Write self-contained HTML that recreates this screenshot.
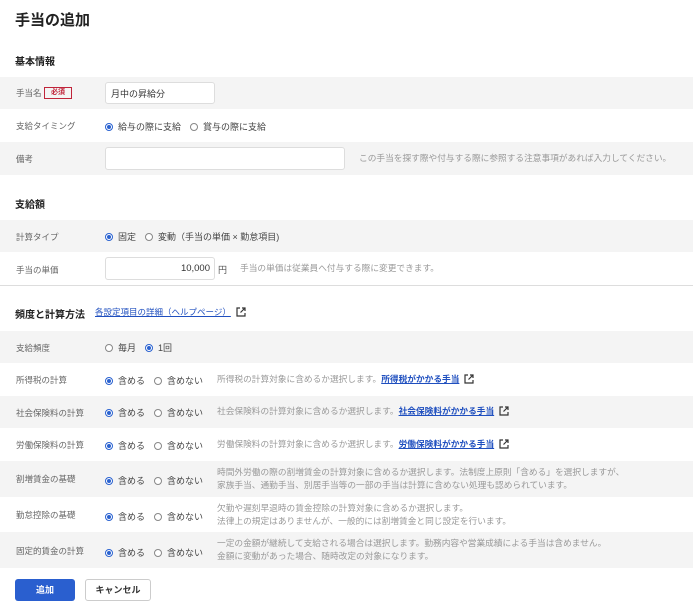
<!DOCTYPE html>
<html><head><meta charset="utf-8"><style>
*{margin:0;padding:0;box-sizing:border-box}
body{width:693px;height:613px;background:#fff;font-family:"Liberation Sans","Noto Sans CJK JP",sans-serif;color:#333;position:relative;overflow:hidden;font-size:9px}
.a{position:absolute}
h1{position:absolute;left:15px;top:9px;font-size:15px;font-weight:bold;color:#222}
h2{position:absolute;left:15px;font-size:10px;font-weight:bold;color:#222}
.row{position:absolute;left:0;width:693px}
.g{background:#f4f4f4}
.lab{position:absolute;left:16px;font-size:8.5px;color:#666}
.ctl{position:absolute;left:105px;font-size:9px;color:#444;white-space:nowrap;display:flex;align-items:center}
.r{display:inline-block;width:8px;height:8px;border:1px solid #888;border-radius:50%;margin-right:5px;background:#fff;position:relative}
.r.on{border-color:#2a62d0}
.r.on::after{content:"";position:absolute;left:1px;top:1px;width:4px;height:4px;border-radius:50%;background:#2a62d0}
.sp{margin-right:9px}
.desc{position:absolute;left:217px;font-size:8.7px;color:#999;line-height:13px;white-space:nowrap}
.lk{color:#1f4fbf;text-decoration:underline;font-weight:bold}
.inp{position:absolute;background:#fff;border:1px solid #ddd;border-radius:3px}
.ext{display:inline-block;width:10px;height:10px;margin-left:5px;vertical-align:-2px}
</style></head><body>
<svg width="0" height="0" style="position:absolute"><defs><symbol id="x" viewBox="0 0 10 10"><path d="M4 1H1v8h8V6" fill="none" stroke="#333" stroke-width="1.2"/><path d="M6 1h3v3M9 1L4.5 5.5" fill="none" stroke="#333" stroke-width="1.2"/></symbol></defs></svg>
<h1>手当の追加</h1>
<h2 style="top:53px">基本情報</h2>
<div class="row g" style="top:77px;height:32px"></div>
<div class="lab" style="top:87px">手当名</div>
<div class="a" style="left:44px;top:87px;border:1px solid #c0243a;color:#c0243a;font-size:7px;padding:0 6px;height:12px;line-height:10px;font-weight:bold">必須</div>
<div class="inp" style="left:105px;top:82px;width:110px;height:22px"></div>
<div class="a" style="left:111px;top:87px;font-size:9px">月中の昇給分</div>
<div class="lab" style="top:120px">支給タイミング</div>
<div class="ctl" style="top:120px"><span class="r on"></span><span class="sp">給与の際に支給</span><span class="r"></span>賞与の際に支給</div>
<div class="row g" style="top:142px;height:33px"></div>
<div class="lab" style="top:153px">備考</div>
<div class="inp" style="left:105px;top:147px;width:240px;height:23px"></div>
<div class="desc" style="left:359px;top:152px">この手当を探す際や付与する際に参照する注意事項があれば入力してください。</div>
<h2 style="top:196px">支給額</h2>
<div class="row g" style="top:220px;height:32px"></div>
<div class="lab" style="top:231px">計算タイプ</div>
<div class="ctl" style="top:230px"><span class="r on"></span><span class="sp">固定</span><span class="r"></span>変動（手当の単価 × 勤怠項目)</div>
<div class="lab" style="top:264px">手当の単価</div>
<div class="inp" style="left:105px;top:257px;width:110px;height:23px"></div>
<div class="a" style="left:150px;top:263px;width:60px;text-align:right;font-size:9.5px">10,000</div>
<div class="a" style="left:218px;top:263px;color:#555">円</div>
<div class="desc" style="left:240px;top:262px">手当の単価は従業員へ付与する際に変更できます。</div>
<div class="row" style="top:285px;height:1px;background:#ddd"></div>
<h2 style="top:306px">頻度と計算方法</h2>
<div class="a" style="left:95px;top:306px;font-size:8.5px" ><span class="lk" style="font-weight:normal">各設定項目の詳細（ヘルプページ）</span><svg class="ext"><use href="#x"/></svg></div>
<div class="row g" style="top:331px;height:32px"></div>
<div class="lab" style="top:342px">支給頻度</div>
<div class="ctl" style="top:341px"><span class="r"></span><span class="sp">毎月</span><span class="r on"></span>1回</div>

<div class="lab" style="top:374px">所得税の計算</div>
<div class="ctl" style="top:374px"><span class="r on"></span><span class="sp">含める</span><span class="r"></span>含めない</div>
<div class="desc" style="top:373px">所得税の計算対象に含めるか選択します。<span class="lk">所得税がかかる手当</span><svg class="ext"><use href="#x"/></svg></div>

<div class="row g" style="top:396px;height:32px"></div>
<div class="lab" style="top:407px">社会保険料の計算</div>
<div class="ctl" style="top:406px"><span class="r on"></span><span class="sp">含める</span><span class="r"></span>含めない</div>
<div class="desc" style="top:405px">社会保険料の計算対象に含めるか選択します。<span class="lk">社会保険料がかかる手当</span><svg class="ext"><use href="#x"/></svg></div>

<div class="lab" style="top:439px">労働保険料の計算</div>
<div class="ctl" style="top:439px"><span class="r on"></span><span class="sp">含める</span><span class="r"></span>含めない</div>
<div class="desc" style="top:438px">労働保険料の計算対象に含めるか選択します。<span class="lk">労働保険料がかかる手当</span><svg class="ext"><use href="#x"/></svg></div>

<div class="row g" style="top:461px;height:36px"></div>
<div class="lab" style="top:473px">割増賃金の基礎</div>
<div class="ctl" style="top:474px"><span class="r on"></span><span class="sp">含める</span><span class="r"></span>含めない</div>
<div class="desc" style="top:466px">時間外労働の際の割増賃金の計算対象に含めるか選択します。法制度上原則「含める」を選択しますが、<br>家族手当、通勤手当、別居手当等の一部の手当は計算に含めない処理も認められています。</div>

<div class="lab" style="top:509px">勤怠控除の基礎</div>
<div class="ctl" style="top:510px"><span class="r on"></span><span class="sp">含める</span><span class="r"></span>含めない</div>
<div class="desc" style="top:502px">欠勤や遅刻早退時の賃金控除の計算対象に含めるか選択します。<br>法律上の規定はありませんが、一般的には割増賃金と同じ設定を行います。</div>

<div class="row g" style="top:532px;height:36px"></div>
<div class="lab" style="top:545px">固定的賃金の計算</div>
<div class="ctl" style="top:546px"><span class="r on"></span><span class="sp">含める</span><span class="r"></span>含めない</div>
<div class="desc" style="top:537px">一定の金額が継続して支給される場合は選択します。勤務内容や営業成績による手当は含めません。<br>金額に変動があった場合、随時改定の対象になります。</div>

<div class="a" style="left:15px;top:579px;width:60px;height:22px;background:#2a5fcf;border-radius:3px;color:#fff;font-weight:bold;text-align:center;line-height:22px;font-size:9px">追加</div>
<div class="a" style="left:85px;top:579px;width:66px;height:22px;border:1px solid #ccc;border-radius:3px;color:#333;font-weight:bold;text-align:center;line-height:20px;font-size:9px">キャンセル</div>
</body></html>
